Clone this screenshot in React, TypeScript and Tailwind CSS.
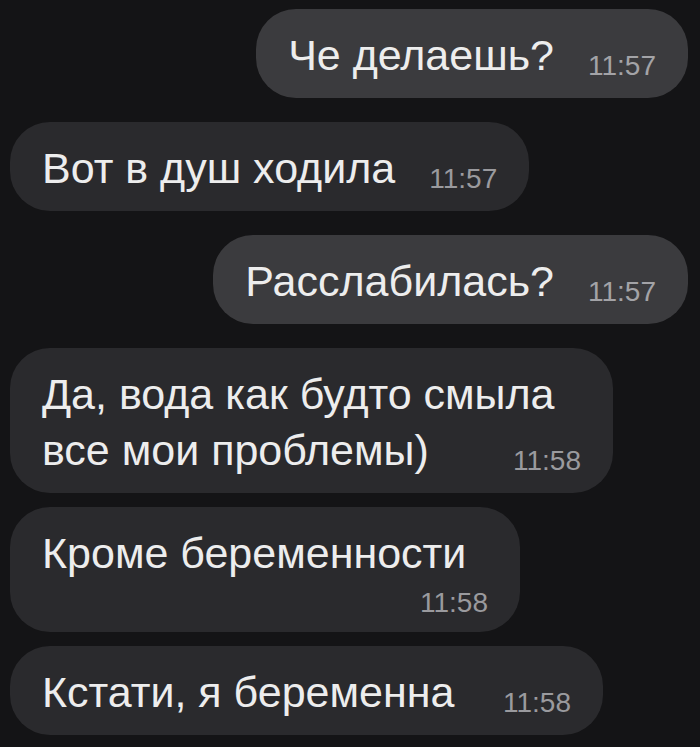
import React from "react";

type Msg = {
  id: number;
  out: boolean;
  lines: string[];
  time: string;
  // time goes on its own line under the text
  timeBelow?: boolean;
  tight?: boolean;
  w?: string;
};

const messages: Msg[] = [
  { id: 1, out: true, lines: ["Че делаешь?"], time: "11:57" },
  { id: 2, out: false, lines: ["Вот в душ ходила"], time: "11:57" },
  { id: 3, out: true, lines: ["Расслабилась?"], time: "11:57" },
  { id: 4, out: false, lines: ["Да, вода как будто смыла", "все мои проблемы)"], time: "11:58", w: "w-[603px]" },
  { id: 5, out: false, lines: ["Кроме беременности"], time: "11:58", timeBelow: true, tight: true, w: "w-[510px]" },
  { id: 6, out: false, lines: ["Кстати, я беременна"], time: "11:58", tight: true, w: "w-[593px]" },
];

function Time({ value, out, lead = "leading-[34px]" }: { value: string; out: boolean; lead?: string }) {
  return (
    <span
      className={`shrink-0 text-[28px] ${lead} whitespace-nowrap ${out ? "text-[#a3a3a7]" : "text-[#9a9a9e]"}`}
    >
      {value}
    </span>
  );
}

function Bubble({ msg }: { msg: Msg }) {
  const bg = msg.out ? "bg-[#3b3b3e]" : "bg-[#2a2a2d]";
  const base = `rounded-[40px] ${bg} ${msg.w ?? ""} pl-[32px] pr-[32px] pt-[18px] pb-[15px] text-[43px] leading-[56px] text-[#ededed]`;

  if (msg.timeBelow) {
    return (
      <div className={`${base} flex flex-col items-end`}>
        <span className="self-start whitespace-nowrap">{msg.lines[0]}</span>
        <div className="h-[36px] flex items-end">
          <Time value={msg.time} out={msg.out} lead="leading-[28px]" />
        </div>
      </div>
    );
  }

  if (msg.lines.length > 1) {
    return (
      <div className={base}>
        <div className="whitespace-nowrap">{msg.lines[0]}</div>
        <div className="flex items-end justify-between">
          <span className="whitespace-nowrap">{msg.lines[1]}</span>
          <Time value={msg.time} out={msg.out} />
        </div>
      </div>
    );
  }

  return (
    <div className={`${base} flex items-end justify-between gap-[34px]`}>
      <span className="whitespace-nowrap">{msg.lines[0]}</span>
      <Time value={msg.time} out={msg.out} />
    </div>
  );
}

export default function App() {
  return (
    <div
      className="w-[700px] h-[747px] overflow-hidden bg-[#141416] pt-[9px] pl-[10px] pr-[12px] flex flex-col"
      style={{ fontFamily: '"Liberation Sans", Arial, sans-serif' }}
    >
      {messages.map((m) => (
        <div
          key={m.id}
          className={`flex ${m.out ? "justify-end" : "justify-start"} ${
            m.id === 1 ? "" : m.tight ? "mt-[14px]" : "mt-[24px]"
          }`}
        >
          <Bubble msg={m} />
        </div>
      ))}
    </div>
  );
}
